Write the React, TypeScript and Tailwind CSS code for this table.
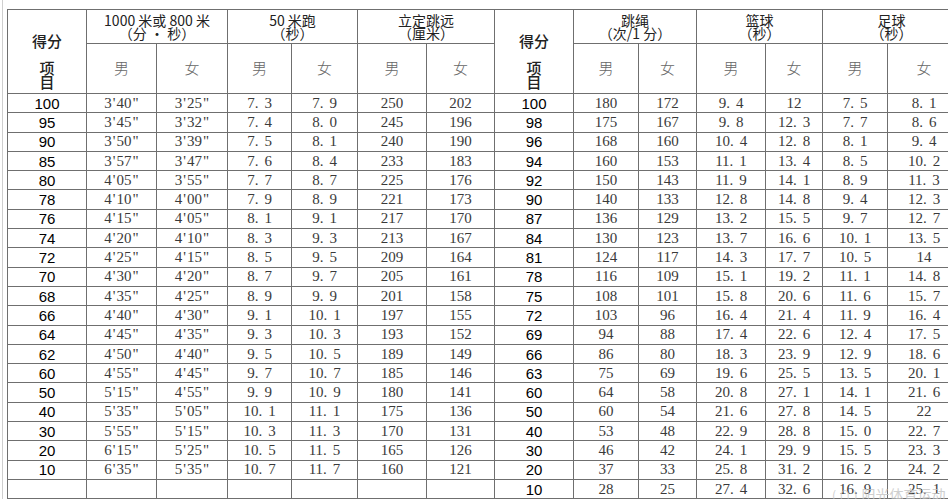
import React from "react";

// 左表：1000米/800米、50米跑、立定跳远
const leftRows: string[][] = [
  ["100", `3'40"`, `3'25"`, "7.3", "7.9", "250", "202"],
  ["95", `3'45"`, `3'32"`, "7.4", "8.0", "245", "196"],
  ["90", `3'50"`, `3'39"`, "7.5", "8.1", "240", "190"],
  ["85", `3'57"`, `3'47"`, "7.6", "8.4", "233", "183"],
  ["80", `4'05"`, `3'55"`, "7.7", "8.7", "225", "176"],
  ["78", `4'10"`, `4'00"`, "7.9", "8.9", "221", "173"],
  ["76", `4'15"`, `4'05"`, "8.1", "9.1", "217", "170"],
  ["74", `4'20"`, `4'10"`, "8.3", "9.3", "213", "167"],
  ["72", `4'25"`, `4'15"`, "8.5", "9.5", "209", "164"],
  ["70", `4'30"`, `4'20"`, "8.7", "9.7", "205", "161"],
  ["68", `4'35"`, `4'25"`, "8.9", "9.9", "201", "158"],
  ["66", `4'40"`, `4'30"`, "9.1", "10.1", "197", "155"],
  ["64", `4'45"`, `4'35"`, "9.3", "10.3", "193", "152"],
  ["62", `4'50"`, `4'40"`, "9.5", "10.5", "189", "149"],
  ["60", `4'55"`, `4'45"`, "9.7", "10.7", "185", "146"],
  ["50", `5'15"`, `4'55"`, "9.9", "10.9", "180", "141"],
  ["40", `5'35"`, `5'05"`, "10.1", "11.1", "175", "136"],
  ["30", `5'55"`, `5'15"`, "10.3", "11.3", "170", "131"],
  ["20", `6'15"`, `5'25"`, "10.5", "11.5", "165", "126"],
  ["10", `6'35"`, `5'35"`, "10.7", "11.7", "160", "121"],
  ["", "", "", "", "", "", ""],
];

// 右表：跳绳、篮球、足球
const rightRows: string[][] = [
  ["100", "180", "172", "9.4", "12", "7.5", "8.1"],
  ["98", "175", "167", "9.8", "12.3", "7.7", "8.6"],
  ["96", "168", "160", "10.4", "12.8", "8.1", "9.4"],
  ["94", "160", "153", "11.1", "13.4", "8.5", "10.2"],
  ["92", "150", "143", "11.9", "14.1", "8.9", "11.3"],
  ["90", "140", "133", "12.8", "14.8", "9.4", "12.3"],
  ["87", "136", "129", "13.2", "15.5", "9.7", "12.7"],
  ["84", "130", "123", "13.7", "16.6", "10.1", "13.5"],
  ["81", "124", "117", "14.3", "17.7", "10.5", "14"],
  ["78", "116", "109", "15.1", "19.2", "11.1", "14.8"],
  ["75", "108", "101", "15.8", "20.6", "11.6", "15.7"],
  ["72", "103", "96", "16.4", "21.4", "11.9", "16.4"],
  ["69", "94", "88", "17.4", "22.6", "12.4", "17.5"],
  ["66", "86", "80", "18.3", "23.9", "12.9", "18.6"],
  ["63", "75", "69", "19.6", "25.5", "13.5", "20.1"],
  ["60", "64", "58", "20.8", "27.1", "14.1", "21.6"],
  ["50", "60", "54", "21.6", "27.8", "14.5", "22"],
  ["40", "53", "48", "22.9", "28.8", "15.0", "22.7"],
  ["30", "46", "42", "24.1", "29.9", "15.5", "23.3"],
  ["20", "37", "33", "25.8", "31.2", "16.2", "24.2"],
  ["10", "28", "25", "27.4", "32.6", "16.9", "25.1"],
];

const colWidths = [79, 70, 71, 64, 66, 69, 68, 79, 65, 58, 69, 57, 65, 73];

const cjk = "font-['Noto_Sans_CJK_SC','Noto_Sans',sans-serif]";
const serif = "font-['Liberation_Serif','Noto_Sans_CJK_SC',serif]";
const cell = "border border-[#6f6f6f] p-0 text-center align-middle";

// 仿宋体半角符号的宽度：小数点和分秒号后留点空
const Num = ({ value }: { value: string }) => (
  <>
    {value.split("").map((ch, i) => {
      if (ch === ".") return <span key={i} className="mr-[6px]">.</span>;
      if (ch === "'") return <span key={i} className="mx-[1px]">'</span>;
      if (ch === '"') return <span key={i} className="ml-[1px]">"</span>;
      return <React.Fragment key={i}>{ch}</React.Fragment>;
    })}
  </>
);

const ScoreHead = () => (
  <th rowSpan={2} className="border border-[#6f6f6f] p-0 align-top">
    <div className={`flex flex-col items-center pt-[22px] ${cjk} font-medium text-[15px] text-[#222]`}>
      <span className="leading-[18px]">得分</span>
      <span className="mt-[11px] leading-[14px] whitespace-pre-line">{"项\n目"}</span>
    </div>
  </th>
);

const GroupHead = ({ top, bottom }: { top: string; bottom: string }) => (
  <th colSpan={2} className={`${cell} ${cjk} font-normal text-[14px] text-[#222]`}>
    <div className="leading-[13px] whitespace-pre-line">{`${top}\n${bottom}`}</div>
  </th>
);

const SexHead = ({ label }: { label: string }) => (
  <th className={`${cell} ${cjk} font-light text-[15px] text-[#666]`}>{label}</th>
);

const DataCells = ({ row }: { row: string[] }) => (
  <>
    <td className={`${cell} font-['Liberation_Sans',sans-serif] font-normal text-[15px] text-black`}>
      {row[0]}
    </td>
    {row.slice(1).map((v, i) => (
      <td key={i} className={`${cell} ${serif} text-[15px] text-[#3a3a3a]`}>
        <Num value={v} />
      </td>
    ))}
  </>
);

export default function App() {
  return (
    <div className="relative w-[948px] h-[499px] overflow-hidden bg-white">
      <div className="ml-[2px] h-full border-l border-[#cfcfcf] pl-[4px] pt-[9px]">
        <table className="table-fixed border-collapse w-[953px]">
          <colgroup>
            {colWidths.map((w, i) => (
              <col key={i} style={{ width: w }} />
            ))}
          </colgroup>
          <thead>
            <tr className="h-[34px]">
              <ScoreHead />
              <GroupHead top="1000 米或 800 米" bottom="（分 • 秒）" />
              <GroupHead top="50 米跑" bottom="（秒）" />
              <GroupHead top="立定跳远" bottom="（厘米）" />
              <ScoreHead />
              <GroupHead top="跳绳" bottom="（次/1 分）" />
              <GroupHead top="篮球" bottom="（秒）" />
              <GroupHead top="足球" bottom="（秒）" />
            </tr>
            <tr className="h-[50px]">
              {["男", "女", "男", "女", "男", "女"].map((s, i) => (
                <SexHead key={`l${i}`} label={s} />
              ))}
              {["男", "女", "男", "女", "男", "女"].map((s, i) => (
                <SexHead key={`r${i}`} label={s} />
              ))}
            </tr>
          </thead>
          <tbody>
            {rightRows.map((r, i) => (
              <tr key={i} className="h-[19.3px] leading-[17px]">
                <DataCells row={leftRows[i]} />
                <DataCells row={r} />
              </tr>
            ))}
          </tbody>
        </table>
      </div>
      {/* 右下角水印 */}
      <div className={`absolute left-[832px] top-[484px] flex items-center gap-[4px] text-[14px] text-[#c4c4c4] opacity-80 ${cjk}`}>
        <span className="text-[12px]">( ∩ )</span>
        <span>阳光体育运动</span>
      </div>
    </div>
  );
}
